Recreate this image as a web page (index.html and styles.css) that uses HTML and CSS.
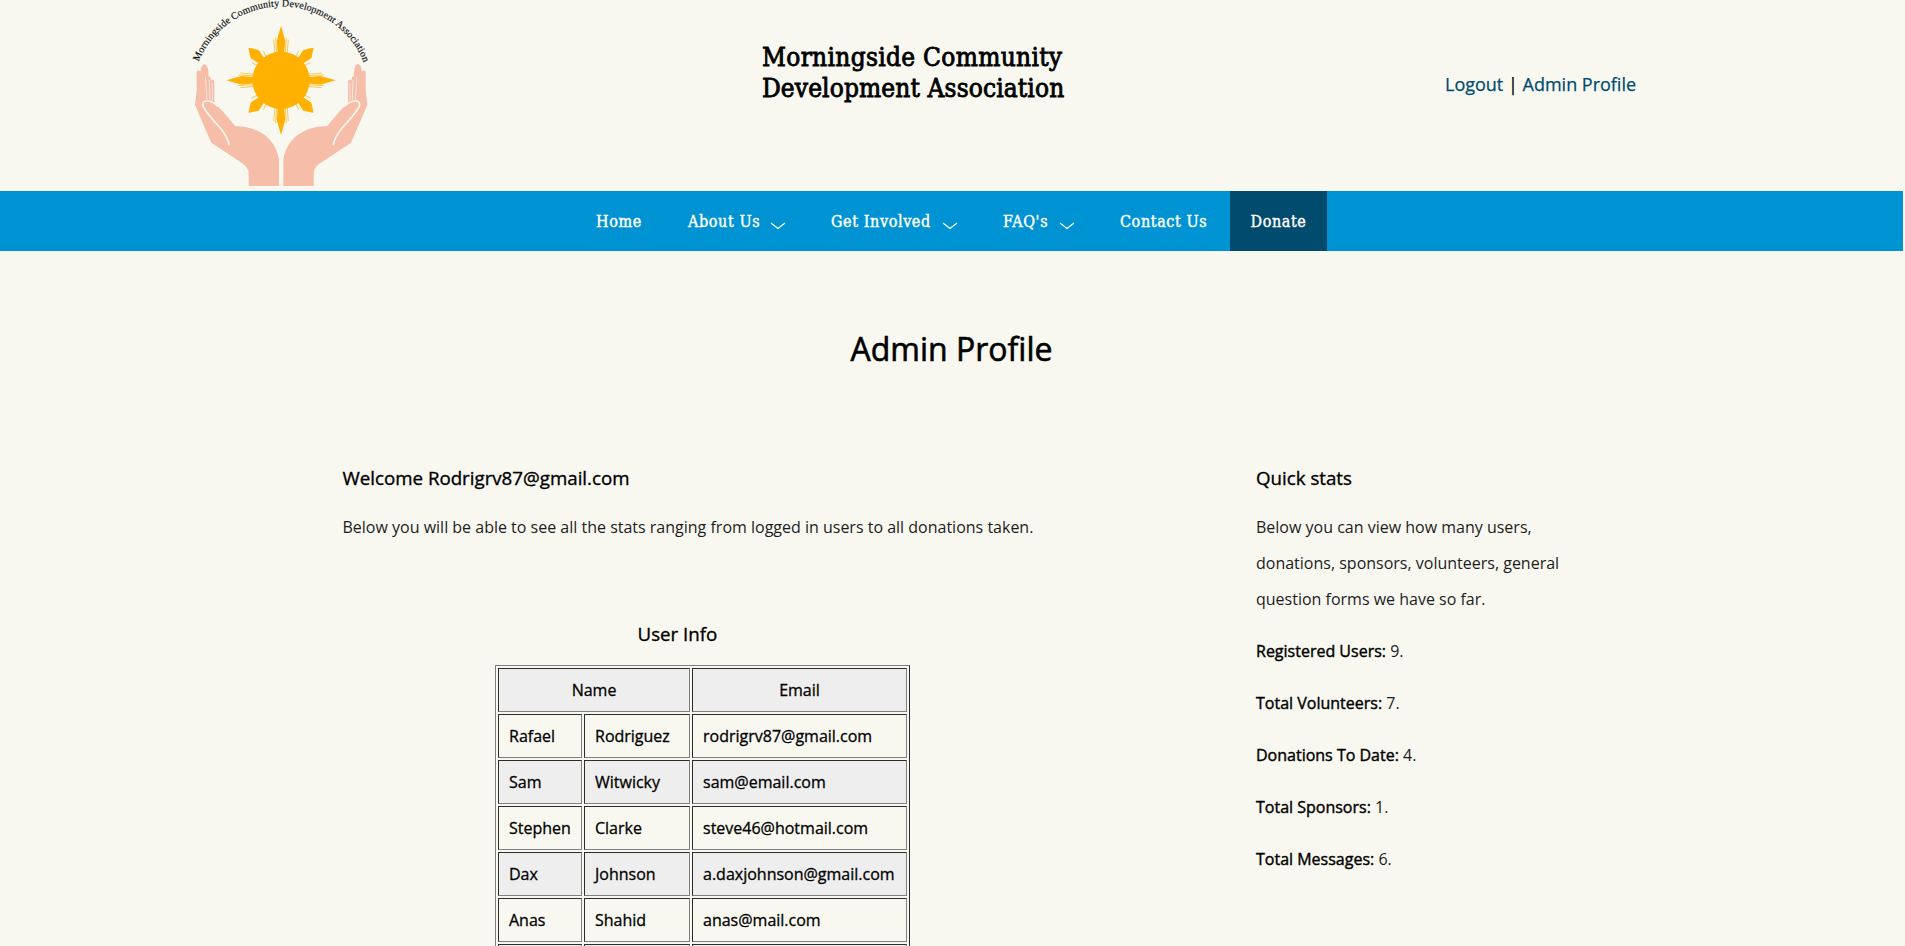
FILE: index.html
```html
<!DOCTYPE html>
<html lang="en">
<head>
<meta charset="utf-8">
<title>Admin Profile</title>
<link rel="stylesheet" href="styles.css">
</head>
<body>
<header class="header">
  <svg class="logo" viewBox="0 0 630 573" aria-hidden="true">
    <defs>
      <path id="arc" d="M56 185 A 267 267 0 0 1 553 192"/>
      <g id="ray">
        <path d="M-9 -78 L-13 -118 L0 -164 L13 -118 L9 -78Z" fill="#ffb000"/>
        <path d="M-13 -80 L-16 -128 M-18 -78 L-22 -122 M13 -80 L16 -128 M18 -78 L22 -122" stroke="#fdc84e" stroke-width="3" fill="none"/>
      </g>
      <g id="diag">
        <path d="M-10 -76 L-17 -112 L-1 -137 L1 -137 L17 -112 L10 -76Z" fill="#ffb000"/>
        <path d="M-17 -78 L-25 -100 M17 -78 L25 -100" stroke="#fdc84e" stroke-width="3"/>
      </g>
      <g id="hand">
        <path d="M50 214 Q56 209 62 214 Q62 195 74 192 Q86 195 86 231 Q91 226 93 241 Q101 235 103 244 L103 308 L130 336 L166 379 C225 377 287 410 297 480 L297 558 L206 558 L206 520 Q205 503 190 492 L94 428 L66 364 L45 314 L50 270Z" fill="#f6bda9"/>
        <path d="M76 230 L81 299 M88 240 L90 301 M97 248 L97 304" stroke="#f8f8f1" stroke-width="2" fill="none"/>
        <path d="M147 434 Q143 412 121 384 Q85 346 70 321 Q64 306 77 303 Q98 302 112 318" stroke="#fbf5eb" stroke-width="5" fill="none" stroke-linecap="round"/>
      </g>
    </defs>
    <text class="logo-text"><textPath href="#arc" textLength="634">Morningside Community Development Association</textPath></text>
    <g transform="translate(303 241)">
      <use href="#ray"/><use href="#ray" transform="rotate(90)"/><use href="#ray" transform="rotate(180)"/><use href="#ray" transform="rotate(270)"/>
      <use href="#diag" transform="rotate(45)"/><use href="#diag" transform="rotate(135)"/><use href="#diag" transform="rotate(225)"/><use href="#diag" transform="rotate(315)"/>
      <circle r="86" fill="#ffb000"/>
    </g>
    <use href="#hand"/>
    <use href="#hand" transform="matrix(-1 0 0 1 607 0)"/>
  </svg>
  <div class="brand"><span class="brand-one">Morningside Community</span><br><span class="brand-two">Development Association</span></div>
  <div class="account"><a href="#">Logout</a> | <a href="#">Admin Profile</a></div>
</header>
<nav class="nav">
  <a class="item home" href="#"><span>Home</span></a>
  <a class="item about" href="#"><span>About Us</span><svg class="chev" viewBox="0 0 16 8"><path d="M1 1 L8 6.5 L15 1"/></svg></a>
  <a class="item involved" href="#"><span>Get Involved</span><svg class="chev" viewBox="0 0 16 8"><path d="M1 1 L8 6.5 L15 1"/></svg></a>
  <a class="item faq" href="#"><span>FAQ's</span><svg class="chev" viewBox="0 0 16 8"><path d="M1 1 L8 6.5 L15 1"/></svg></a>
  <a class="item contact" href="#"><span>Contact Us</span></a>
  <a class="item donate" href="#"><span>Donate</span></a>
</nav>
<h1 class="title">Admin Profile</h1>
<main class="content">
  <section class="main-col">
    <h3>Welcome Rodrigrv87@gmail.com</h3>
    <p>Below you will be able to see all the stats ranging from logged in users to all donations taken.</p>
    <h3 class="table-title">User Info</h3>
    <table class="users" border="1">
      <tr><th colspan="2">Name</th><th>Email</th></tr>
      <tr><td class="first">Rafael</td><td class="last">Rodriguez</td><td class="email">rodrigrv87@gmail.com</td></tr>
      <tr><td>Sam</td><td>Witwicky</td><td>sam@email.com</td></tr>
      <tr><td>Stephen</td><td>Clarke</td><td>steve46@hotmail.com</td></tr>
      <tr><td>Dax</td><td>Johnson</td><td>a.daxjohnson@gmail.com</td></tr>
      <tr><td>Anas</td><td>Shahid</td><td>anas@mail.com</td></tr>
      <tr><td>&nbsp;</td><td></td><td></td></tr>
    </table>
  </section>
  <aside class="stats">
    <h3>Quick stats</h3>
    <p>Below you can view how many users, donations, sponsors, volunteers, general question forms we have so far.</p>
    <p><strong>Registered Users:</strong> 9.</p>
    <p><strong>Total Volunteers:</strong> 7.</p>
    <p><strong>Donations To Date:</strong> 4.</p>
    <p><strong>Total Sponsors:</strong> 1.</p>
    <p><strong>Total Messages:</strong> 6.</p>
  </aside>
</main>
</body>
</html>
```
FILE: styles.css
```css
* { box-sizing: border-box; }
html, body { height: 946px; overflow: hidden; }
body {
  margin: 0;
  background: #f8f8f1;
  color: #000;
  font-family: "Open Sans", sans-serif;
  font-size: 16px;
}
a { text-decoration: none; color: #004b6e; }
.header {
  display: flex;
  height: 191px;
  padding-left: 180px;
}
.logo { width: 210px; height: 191px; flex: none; }
.logo-text { font-family: "Liberation Serif", serif; font-size: 30px; fill: #111; stroke: #111; stroke-width: 0.5px; }
.brand {
  width: 320px;
  margin: 42px 0 0 372px;
  font-family: "DejaVu Serif Condensed", "DejaVu Serif", serif;
  font-stretch: condensed;
  font-size: 26px;
  line-height: 31px;
  white-space: nowrap;
  -webkit-text-stroke: 0.8px #000;
}
.brand-one { letter-spacing: 0.3px; }
.brand-two { letter-spacing: 0.12px; }
.account {
  margin: 72px 0 0 363px;
  font-size: 18px;
  line-height: 25px;
  white-space: nowrap;
  -webkit-text-stroke: 0.25px;
}
.nav {
  display: flex;
  width: 1903px;
  height: 60px;
  padding-left: 596px;
  background: #0093d3;
  font-family: "DejaVu Serif Condensed", "DejaVu Serif", serif;
  font-stretch: condensed;
  font-size: 16px;
  letter-spacing: 0.6px;
  -webkit-text-stroke: 0.4px;
}
.item { display: flex; align-items: center; color: #fff; white-space: nowrap; }
.chev { width: 16px; height: 8px; margin: 9px 45px 0 auto; flex: none; }
.chev path { fill: none; stroke: #fff; stroke-width: 1.2; }
.home { width: 92px; }
.about { width: 143px; }
.involved { width: 172px; }
.faq { width: 117px; }
.contact { width: 110px; }
.donate { width: 97px; justify-content: center; background: #004b6e; }
.title {
  width: 1903px;
  margin: 76px 0 0;
  text-align: center;
  font-size: 32px;
  line-height: 44px;
  font-weight: 400;
  -webkit-text-stroke: 0.6px;
}
.content { display: flex; padding: 94px 0 0 342.5px; }
.main-col { width: 913.5px; }
.stats { width: 320px; }
h3 {
  margin: 0;
  font-size: 18.72px;
  line-height: 26px;
  font-weight: 400;
  -webkit-text-stroke: 0.35px;
}
p { margin: 18px 0 16px; line-height: 36px; color: #1c1c1c; }
p + p { margin-top: 16px; }
strong { font-weight: 400; color: #000; -webkit-text-stroke: 0.4px; }
.table-title { margin: 76px 0 18px 295px; }
.users { margin-left: 152.5px; }
.users th, .users td { padding: 10px; font-weight: 400; -webkit-text-stroke: 0.3px; }
.users .first { width: 84px; }
.users .last { width: 106px; }
.users .email { width: 215px; }
.users tr:nth-child(odd) { background: #eee; }
```
